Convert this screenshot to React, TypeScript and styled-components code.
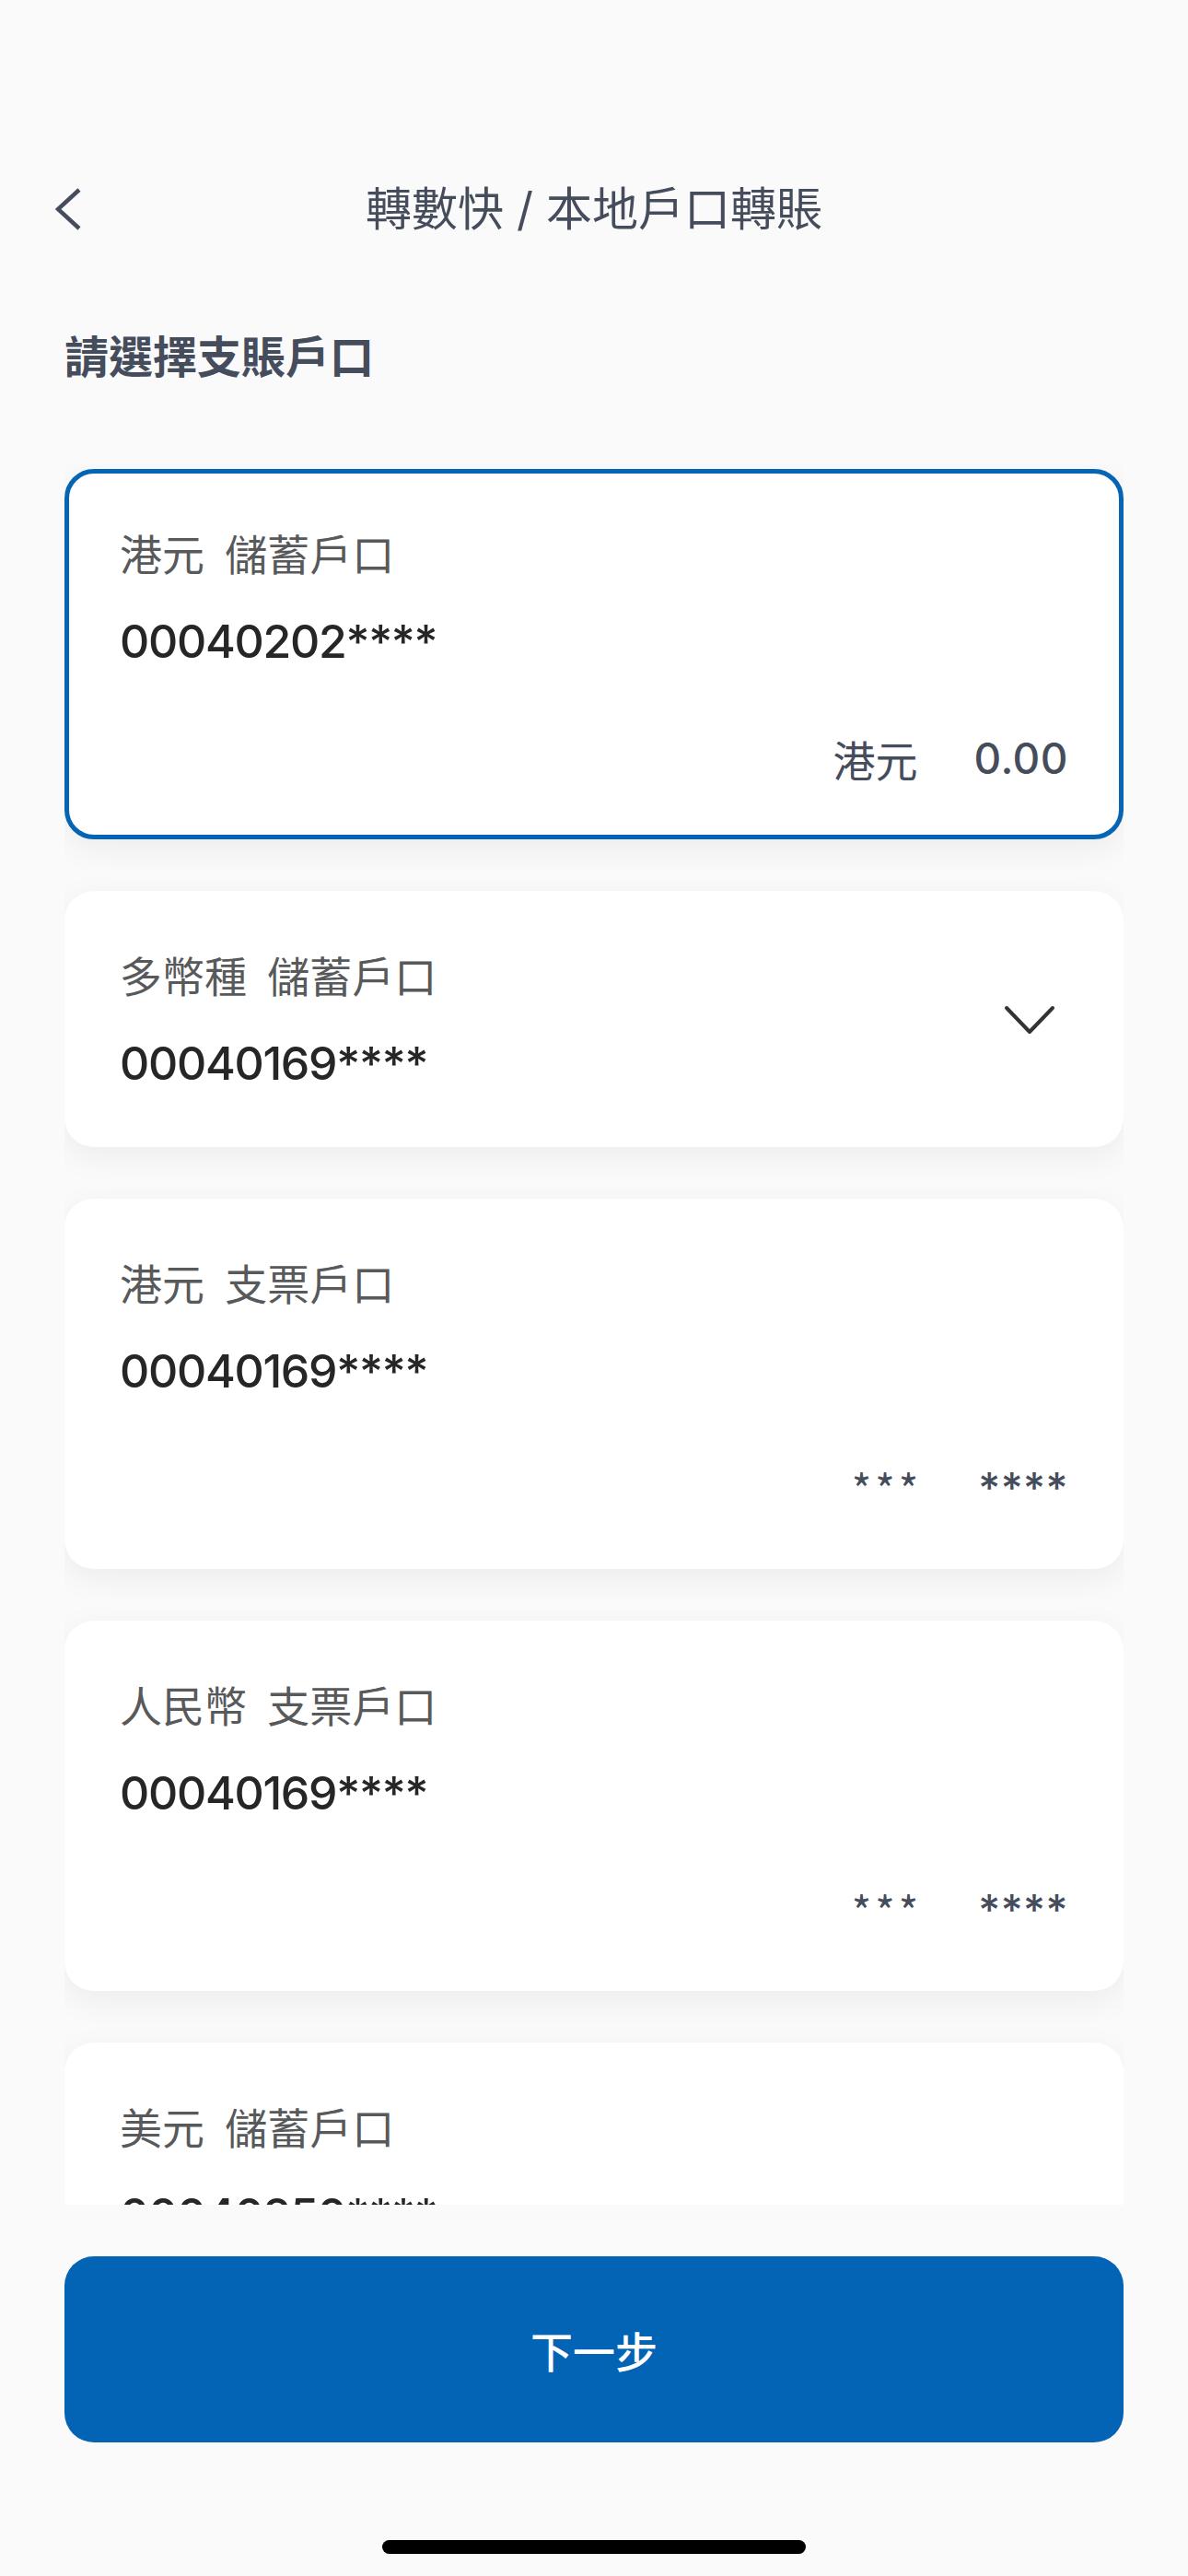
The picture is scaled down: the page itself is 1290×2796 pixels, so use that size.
import styled, { createGlobalStyle } from 'styled-components';

const GlobalStyle = createGlobalStyle`
  html, body {
    margin: 0;
    padding: 0;
    background: #fafafa;
  }
  * {
    box-sizing: border-box;
  }
`;

type Account = {
  label: string;
  number: string;
  currency?: string;
  balance?: string;
  selected?: boolean;
  expandable?: boolean;
};

const accounts: Account[] = [
  { label: '港元 儲蓄戶口', number: '00040202****', currency: '港元', balance: '0.00', selected: true },
  { label: '多幣種 儲蓄戶口', number: '00040169****', expandable: true },
  { label: '港元 支票戶口', number: '00040169****', currency: '***', balance: '****' },
  { label: '人民幣 支票戶口', number: '00040169****', currency: '***', balance: '****' },
  { label: '美元 儲蓄戶口', number: '00040250****', currency: '***', balance: '****' },
];

export default function App() {
  return (
    <Screen>
      <GlobalStyle />
      <StatusSpacer />
      <Header>
        <BackButton>
          <svg width="30" height="48" viewBox="0 0 30 48">
            <polyline points="26,3 3,24 26,45" fill="none" stroke="#454c5c" strokeWidth="4.5" />
          </svg>
        </BackButton>
        <Title>轉數快 / 本地戶口轉賬</Title>
        <span />
      </Header>
      <SectionTitle>請選擇支賬戶口</SectionTitle>
      <AccountList>
        {accounts.map((a, i) => (
          <Card key={i} $selected={a.selected}>
            <CardBody>
              <Label>{a.label}</Label>
              <Number>{a.number}</Number>
              {a.currency && (
                <AmountRow>
                  <Currency $masked={a.currency === '***'}>{a.currency}</Currency>
                  <Balance>{a.balance}</Balance>
                </AmountRow>
              )}
            </CardBody>
            {a.expandable && (
              <Chevron width="56" height="32" viewBox="0 0 56 32">
                <polyline
                  points="3,3 28,29 53,3"
                  fill="none"
                  stroke="#333333"
                  strokeWidth="4"
                  strokeLinecap="round"
                  strokeLinejoin="round"
                />
              </Chevron>
            )}
          </Card>
        ))}
      </AccountList>
      <NextButton>下一步</NextButton>
      <HomeBar />
    </Screen>
  );
}

const Screen = styled.div`
  width: 1290px;
  height: 2796px;
  display: flex;
  flex-direction: column;
  background: #fafafa;
  font-family: Inter, 'Noto Sans CJK TC', sans-serif;
  overflow: hidden;
`;

const StatusSpacer = styled.div`
  height: 172px;
  flex-shrink: 0;
`;

const Header = styled.div`
  height: 110px;
  flex-shrink: 0;
  padding: 0 60px;
  display: grid;
  grid-template-columns: 1fr auto 1fr;
  align-items: center;
`;

const BackButton = styled.div`
  display: flex;
  align-items: center;
  svg {
    display: block;
  }
`;

const Title = styled.div`
  font-size: 50px;
  line-height: 60px;
  color: #454c5c;
  font-weight: 400;
`;

const SectionTitle = styled.div`
  margin-top: 73px;
  padding: 0 70px;
  font-size: 48px;
  line-height: 58px;
  font-weight: 700;
  color: #454c5c;
  font-family: 'Noto Sans CJK TC', sans-serif;
`;

const AccountList = styled.div`
  margin: 90px 70px 0;
  height: 1890px;
  flex-shrink: 0;
  padding-top: 6px;
  display: flex;
  flex-direction: column;
  gap: 56px;
  overflow: hidden;
`;

const Card = styled.div<{ $selected?: boolean }>`
  flex-shrink: 0;
  display: flex;
  align-items: center;
  background: #ffffff;
  border: 5px solid ${(p) => (p.$selected ? '#0565b4' : 'transparent')};
  border-radius: 32px;
  padding: 55px 55px 53px 55px;
  box-shadow: 0 10px 36px rgba(0, 0, 0, 0.06);
`;

const CardBody = styled.div`
  flex: 1;
  display: flex;
  flex-direction: column;
`;

const Label = styled.div`
  font-family: 'Noto Sans CJK TC', sans-serif;
  font-size: 46px;
  line-height: 60px;
  color: #58595b;
  word-spacing: 12px;
`;

const Number = styled.div`
  margin-top: 34px;
  font-size: 50px;
  line-height: 66px;
  font-weight: 500;
  letter-spacing: -1.3px;
  color: #262626;
`;

const AmountRow = styled.div`
  margin-top: 64px;
  display: flex;
  justify-content: flex-end;
  align-items: center;
  gap: 61px;
  line-height: 60px;
  font-size: 46px;
  color: #454c5c;
`;

const Currency = styled.span<{ $masked?: boolean }>`
  font-family: 'Noto Sans CJK TC', sans-serif;
  letter-spacing: ${(p) => (p.$masked ? '4px' : '0')};
`;

const Balance = styled.span`
  font-family: Inter, sans-serif;
  font-weight: 500;
  letter-spacing: 0.5px;
`;

const Chevron = styled.svg`
  display: block;
  flex-shrink: 0;
  margin-right: 14px;
`;

const NextButton = styled.button`
  margin: 56px 70px 0;
  height: 202px;
  flex-shrink: 0;
  border: none;
  border-radius: 32px;
  background: #0364b5;
  color: #ffffff;
  font-family: 'Noto Sans CJK TC', sans-serif;
  font-size: 46px;
  font-weight: 500;
  cursor: pointer;
`;

const HomeBar = styled.div`
  margin: 106px auto 0;
  width: 460px;
  height: 15px;
  flex-shrink: 0;
  border-radius: 8px;
  background: #000000;
`;
